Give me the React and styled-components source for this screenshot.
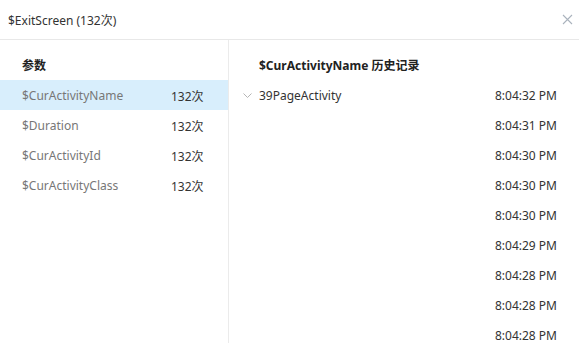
import React from "react";
import styled, { createGlobalStyle } from "styled-components";

const Global = createGlobalStyle`
  html, body { margin: 0; padding: 0; background: #fff; }
  body { font-family: "Noto Sans", "Noto Sans CJK SC", sans-serif; font-size: 12px; color: #333; }
`;

const Dialog = styled.div`
  width: 579px;
  height: 343px;
  overflow: hidden;
  display: flex;
  flex-direction: column;
  background: #fff;
`;

const Header = styled.div`
  height: 40px;
  flex-shrink: 0;
  box-sizing: border-box;
  border-bottom: 1px solid #e8e8e8;
  display: flex;
  align-items: center;
  justify-content: space-between;
  padding: 0 4px 0 8px;
`;

const Title = styled.div`
  font-size: 12px;
  color: #333;
`;

const Close = styled.button`
  border: none;
  background: none;
  padding: 0;
  width: 16px;
  height: 16px;
  display: flex;
  align-items: center;
  justify-content: center;
  cursor: pointer;
`;

const Body = styled.div`
  flex: 1;
  display: flex;
  min-height: 0;
  overflow: hidden;
`;

const Left = styled.div`
  width: 228px;
  flex-shrink: 0;
  border-right: 1px solid #ebebeb;
  display: flex;
  flex-direction: column;
`;

const Right = styled.div`
  flex: 1;
  display: flex;
  flex-direction: column;
  padding: 0 22px 0 14px;
  overflow: hidden;
`;

const SectionTitle = styled.div`
  height: 40px;
  flex-shrink: 0;
  box-sizing: border-box;
  padding-top: 9px;
  display: flex;
  align-items: center;
  font-weight: 700;
  color: #222;
  padding-left: ${(p) => p.$indent}px;
`;

const ParamRow = styled.div`
  height: 30px;
  flex-shrink: 0;
  box-sizing: border-box;
  padding-top: 1px;
  display: flex;
  align-items: center;
  padding-left: 22px;
  background: ${(p) => (p.$active ? "#d8eefc" : "transparent")};
`;

const ParamName = styled.span`
  width: 149px;
  color: #777;
`;

const Count = styled.span`
  color: #333;
`;

const HistRow = styled.div`
  height: 30px;
  flex-shrink: 0;
  box-sizing: border-box;
  padding-top: 1px;
  display: flex;
  align-items: center;
`;

const Chevron = styled.span`
  width: 16px;
  display: flex;
  align-items: center;
`;

const ValueText = styled.span`
  flex: 1;
  color: #333;
`;

const Time = styled.span`
  color: #333;
`;

const params = ["$CurActivityName", "$Duration", "$CurActivityId", "$CurActivityClass"];
const times = [
  "8:04:32 PM",
  "8:04:31 PM",
  "8:04:30 PM",
  "8:04:30 PM",
  "8:04:30 PM",
  "8:04:29 PM",
  "8:04:28 PM",
  "8:04:28 PM",
  "8:04:28 PM",
];

export default function App() {
  return (
    <Dialog>
      <Global />
      <Header>
        <Title>$ExitScreen (132次)</Title>
        <Close aria-label="close">
          <svg width="11" height="11" viewBox="0 0 11 11">
            <path d="M1 1 L10 10 M10 1 L1 10" stroke="#aab3bd" strokeWidth="1.1" fill="none" />
          </svg>
        </Close>
      </Header>
      <Body>
        <Left>
          <SectionTitle $indent={22}>参数</SectionTitle>
          {params.map((p, i) => (
            <ParamRow key={p} $active={i === 0}>
              <ParamName>{p}</ParamName>
              <Count>132次</Count>
            </ParamRow>
          ))}
        </Left>
        <Right>
          <SectionTitle $indent={16}>$CurActivityName 历史记录</SectionTitle>
          {times.map((t, i) => (
            <HistRow key={i}>
              <Chevron>
                {i === 0 && (
                  <svg width="9" height="6" viewBox="0 0 9 6">
                    <path d="M0.5 0.5 L4.5 4.5 L8.5 0.5" stroke="#b5b5b5" strokeWidth="1" fill="none" />
                  </svg>
                )}
              </Chevron>
              <ValueText>{i === 0 ? "39PageActivity" : ""}</ValueText>
              <Time>{t}</Time>
            </HistRow>
          ))}
        </Right>
      </Body>
    </Dialog>
  );
}
